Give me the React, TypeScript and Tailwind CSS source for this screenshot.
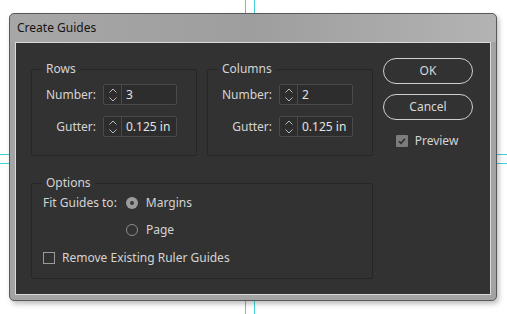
import React from 'react';

// --- ICONS ---

const SpinIcon = () => (
    <svg width="10" height="16" viewBox="0 0 10 16" fill="none" stroke="#b8b8b8" strokeWidth="1">
        <path d="M1.5 5.5L5 2l3.5 3.5" />
        <path d="M1.5 10.5L5 14l3.5-3.5" />
    </svg>
);

const CheckIcon = () => (
    <svg width="12" height="12" viewBox="0 0 12 12" fill="none" stroke="#2e2e2e" strokeWidth="1.6">
        <path d="M3 6.2l2 2.1 4-4.6" />
    </svg>
);

// --- controls ---

const Spinner: React.FC<{ value: string }> = ({ value }) => (
    <div className="flex h-[21px] w-[74px] rounded-[2px] border border-[#4a4a4a] bg-[#2d2d2d]">
        <div className="flex w-[18px] items-center justify-center border-r border-[#4a4a4a]">
            <SpinIcon />
        </div>
        <div className="flex items-center pl-[4px] text-[#e2e2e2]">{value}</div>
    </div>
);

const Field: React.FC<{ label: string; value: string }> = ({ label, value }) => (
    <div className="flex items-center justify-end gap-[7px]">
        <span>{label}</span>
        <Spinner value={value} />
    </div>
);

const Group: React.FC<{ title: string; className?: string; children: React.ReactNode }> = ({ title, className, children }) => (
    <fieldset className={`rounded-[2px] border border-[#262626] ${className ?? ''}`}>
        <legend className="ml-[10px] px-[4px] leading-[16px]">{title}</legend>
        {children}
    </fieldset>
);

const Radio: React.FC<{ checked?: boolean; label: string }> = ({ checked, label }) => (
    <div className="flex items-center gap-[8px]">
        {checked ? (
            <span className="flex h-[12px] w-[12px] items-center justify-center rounded-full bg-[#9c9c9c]">
                <span className="h-[4px] w-[4px] rounded-full bg-[#3a3a3a]" />
            </span>
        ) : (
            <span className="h-[12px] w-[12px] rounded-full border border-[#8c8c8c]" />
        )}
        <span>{label}</span>
    </div>
);

const Button: React.FC<{ label: string }> = ({ label }) => (
    <button className="h-[26px] w-[90px] rounded-full border-[1.5px] border-[#cfcfcf] text-[#d8d8d8]">
        {label}
    </button>
);

// --- MAIN APP COMPONENT ---

export default function App() {
    return (
        <div
            className="relative h-[314px] w-[507px] overflow-hidden bg-white text-[12px] text-[#d4d4d4]"
            style={{ fontFamily: '"Noto Sans", "Open Sans", sans-serif' }}
        >
            {/* ruler guides behind the dialog */}
            <div className="absolute left-[245px] top-0 h-full w-px bg-[#3fd2dc]" />
            <div className="absolute left-[254px] top-0 h-full w-px bg-[#3fd2dc]" />
            <div className="absolute left-0 top-[154px] h-px w-full bg-[#3fd2dc]" />
            <div className="absolute left-0 top-[163px] h-px w-full bg-[#3fd2dc]" />

            <div className="relative ml-[9px] mt-[13px] h-[288px] w-[488px] rounded-[5px] border border-[#5a5a5a] bg-[#a3a3a3] shadow-[2px_3px_5px_rgba(0,0,0,0.25)]">
                <div className="flex h-[28px] items-center rounded-t-[5px] bg-gradient-to-r from-[#a7a7a7] via-[#9e9e9e] to-[#b3b3b3] pl-[7px] text-[#141414]">
                    Create Guides
                </div>
                <div className="mx-[5px] flex h-[253px] border border-[#d9d9d9] bg-[#323232]">
                    <div className="flex flex-col gap-[19px] pl-[15px] pt-[18px]">
                        <div className="flex gap-[10px]">
                            <Group title="Rows" className="h-[95px] w-[166px]">
                                <div className="flex flex-col gap-[11px] pr-[19px] pt-[7px]">
                                    <Field label="Number:" value="3" />
                                    <Field label="Gutter:" value="0.125 in" />
                                </div>
                            </Group>
                            <Group title="Columns" className="h-[95px] w-[166px]">
                                <div className="flex flex-col gap-[11px] pr-[19px] pt-[7px]">
                                    <Field label="Number:" value="2" />
                                    <Field label="Gutter:" value="0.125 in" />
                                </div>
                            </Group>
                        </div>
                        <Group title="Options" className="h-[104px] w-[342px]">
                            <div className="flex flex-col pl-[11px] pt-[4px]">
                                <div className="flex h-[16px] items-center gap-[9px]">
                                    <span>Fit Guides to:</span>
                                    <Radio checked label="Margins" />
                                </div>
                                <div className="mt-[11px] flex h-[16px] items-center pl-[83px]">
                                    <Radio label="Page" />
                                </div>
                                <div className="mt-[12px] flex h-[16px] items-center gap-[7px]">
                                    <span className="h-[12px] w-[12px] border border-[#9a9a9a]" />
                                    <span>Remove Existing Ruler Guides</span>
                                </div>
                            </div>
                        </Group>
                    </div>
                    <div className="ml-[10px] flex flex-col items-center pt-[15px]">
                        <Button label="OK" />
                        <div className="mt-[10px]">
                            <Button label="Cancel" />
                        </div>
                        <div className="mt-[12px] flex items-center gap-[7px] pr-[2px]">
                            <span className="flex h-[12px] w-[12px] items-center justify-center rounded-[1px] bg-[#7c7c7c]">
                                <CheckIcon />
                            </span>
                            <span>Preview</span>
                        </div>
                    </div>
                </div>
            </div>
        </div>
    );
}
